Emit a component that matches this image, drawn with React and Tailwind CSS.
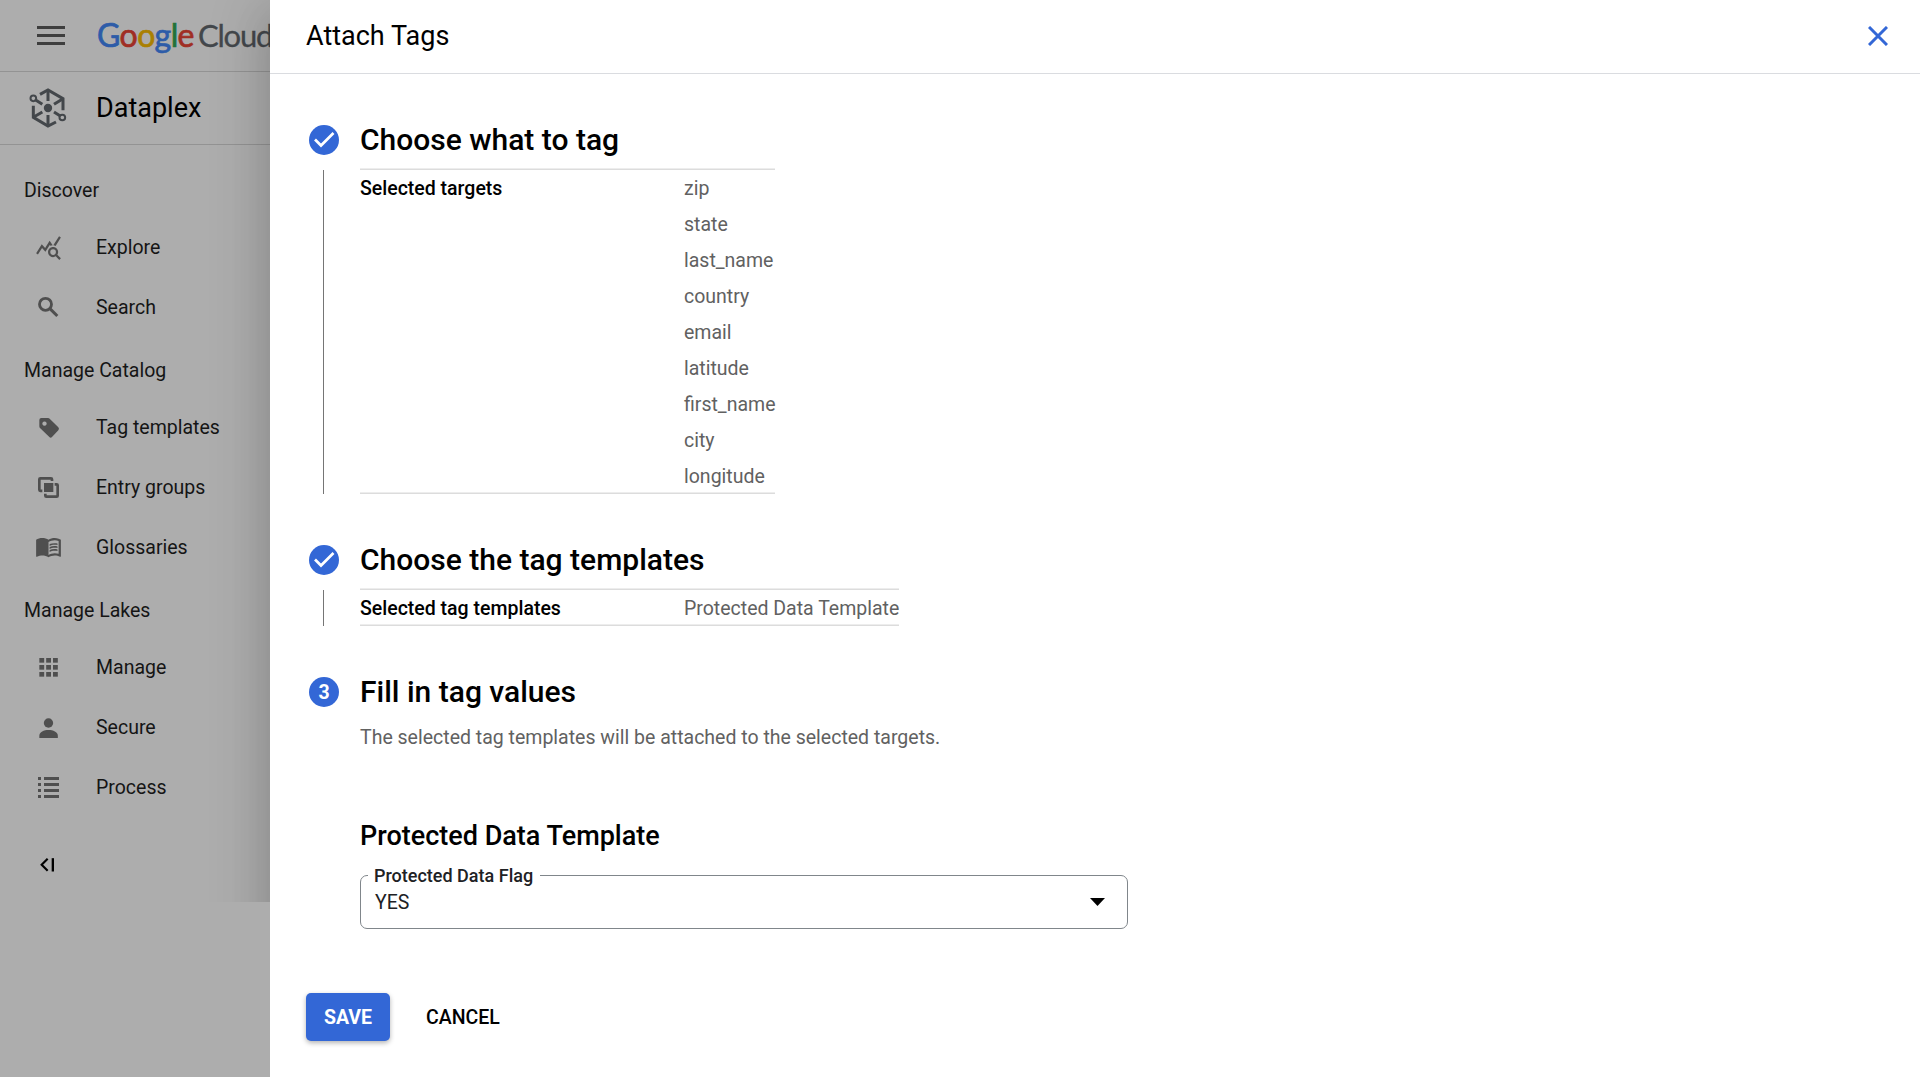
import React from "react";
import { MdQueryStats, MdMenuBook } from "react-icons/md";

const stroke = { fill: "none", stroke: "currentColor" };

const SearchIcon = () => (
  <svg viewBox="105 429 81 81" className="size-[27px]">
    <circle cx="136.500" cy="463" r="18" strokeWidth="8.500" {...stroke} />
    <path d="M149 475L172 498" strokeWidth="9" {...stroke} />
  </svg>
);

const TagIcon = () => (
  <svg viewBox="105 39 81 81" className="size-[27px]" fill="currentColor">
    <path
      fillRule="evenodd"
      d="M124 54h20q3 0 5 2L175 82q4 5 0 9L156 111q-4 4-8 0L120 84q-2-2-2-5V60q0-6 6-6zM133.500 64.500a6.500 6.500 0 1 0 .01 0z"
    />
  </svg>
);

const GroupsIcon = () => (
  <svg viewBox="105 219 81 81" className="size-[27px]">
    <path d="M127 272.500H121q-3 0-3-3V238q0-3 3-3H153q3 0 3 3V243" strokeWidth="8" {...stroke} />
    <path d="M164 253H170q3 0 3 3V287q0 3-3 3H139q-3 0-3-3V281" strokeWidth="8" {...stroke} />
    <rect x="132" y="249" width="28" height="27" fill="currentColor" />
  </svg>
);

const GridIcon = () => (
  <svg viewBox="105 759 81 81" className="size-[27px]" fill="currentColor">
    {[774, 795, 816].map((y) =>
      [118, 138.5, 159].map((x) => <rect key={x + "-" + y} x={x} y={y} width="14.500" height="14" />)
    )}
  </svg>
);

const PersonIcon = () => (
  <svg viewBox="105 219 81 81" className="size-[27px]" fill="currentColor">
    <circle cx="145.500" cy="249" r="14" />
    <path d="M118 294v-7c0-11 14-17 27.500-17s28 6 28 17v7z" />
  </svg>
);

const ListIcon = () => (
  <svg viewBox="105 399 81 81" className="size-[27px]" fill="currentColor" shapeRendering="crispEdges">
    {[411, 429, 447, 465].map((y) => (
      <g key={y}>
        <rect x="114" y={y} width="9" height="9" />
        <rect x="132" y={y} width="45" height="9" />
      </g>
    ))}
  </svg>
);

const DataplexIcon = () => (
  <svg viewBox="87 261 114 126" className="w-[38px] h-[42px] text-[#43474b]">
    <g strokeWidth="9" {...stroke}>
      <path d="M120 283L144 270L189 296V331" />
      <path d="M144 270V303M189 296L162 313" />
      <path d="M168 366L144 378L100 352V317" />
      <path d="M144 378V345M100 352L127 336" />
      <path d="M107 300L127 313M181 348L162 336" />
    </g>
    <circle cx="100" cy="295" r="8.500" strokeWidth="6" {...stroke} />
    <circle cx="187" cy="352.500" r="8.500" strokeWidth="6" {...stroke} />
    <circle cx="144" cy="324" r="12.500" fill="currentColor" />
  </svg>
);

const NavGroup = ({ title, children }) => (
  <section>
    <h3 className="h-[60px] pl-6 pt-[7px] leading-[54px]">{title}</h3>
    {children}
  </section>
);

const NavItem = ({ icon, label }) => (
  <a className="flex h-[60px] items-center pl-[35px]">
    <span className="mb-px w-[61px] text-[#4f4f4f]">{icon}</span>
    <span className="pt-[2px]">{label}</span>
  </a>
);

const Logo = () => (
  <div className="flex items-baseline whitespace-nowrap pb-px font-['Lato'] text-[32px] leading-[40px]">
    <span className="w-[101px] tracking-[-0.600px] [-webkit-text-stroke:0.700px]">
      <span className="text-[#2d5ca8]">G</span>
      <span className="text-[#a02e24]">o</span>
      <span className="text-[#aa8002]">o</span>
      <span className="text-[#2d5ca8]">g</span>
      <span className="text-[#237239]">l</span>
      <span className="text-[#a02e24]">e</span>
    </span>
    <span className="text-[31px] tracking-[-1.200px] text-[#43474b] [-webkit-text-stroke:0.300px]">Cloud</span>
  </div>
);

const Sidebar = () => (
  <aside className="relative h-full w-[270px] shrink-0 overflow-hidden bg-[#adadad] text-[#151515]">
    <div className="flex h-[72px] items-center border-b border-[#939393] pl-[37px]">
      <div className="flex w-[60px] shrink-0 flex-col gap-[5px]">
        <i className="h-[3px] w-7 bg-[#3e3e3e]" />
        <i className="h-[3px] w-7 bg-[#3e3e3e]" />
        <i className="h-[3px] w-7 bg-[#3e3e3e]" />
      </div>
      <Logo />
    </div>
    <div className="flex h-[73px] items-center border-b border-[#939393] pl-[29px]">
      <DataplexIcon />
      <span className="ml-[29px] text-[27px] text-black">Dataplex</span>
    </div>
    <nav className="pt-3">
      <NavGroup title="Discover">
        <NavItem icon={<MdQueryStats size={27} className="relative top-px" />} label="Explore" />
        <NavItem icon={<SearchIcon />} label="Search" />
      </NavGroup>
      <NavGroup title="Manage Catalog">
        <NavItem icon={<TagIcon />} label="Tag templates" />
        <NavItem icon={<GroupsIcon />} label="Entry groups" />
        <NavItem icon={<MdMenuBook size={27} />} label="Glossaries" />
      </NavGroup>
      <NavGroup title="Manage Lakes">
        <NavItem icon={<GridIcon />} label="Manage" />
        <NavItem icon={<PersonIcon />} label="Secure" />
        <NavItem icon={<ListIcon />} label="Process" />
      </NavGroup>
    </nav>
    <svg viewBox="114 649.500 54 54" className="ml-[38px] mt-[39px] h-[18px] w-[18px] text-black">
      <path d="M143 658L125 676L143 694" strokeWidth="6.500" {...stroke} />
      <path d="M158.500 656V696" strokeWidth="7" {...stroke} />
    </svg>
    <div className="pointer-events-none absolute inset-x-0 top-0 h-[902px] overflow-hidden">
      <div className="absolute left-[270px] top-0 h-[1077px] w-[1650px] shadow-[0_24px_36px_3px_rgba(0,0,0,0.1),0_9px_54px_10px_rgba(0,0,0,0.12)]" />
    </div>
  </aside>
);

const Rule = ({ className = "" }) => (
  <div className={"h-[2px] border-t border-b border-t-[#ededed] border-b-[#dcdcdc] " + className} />
);

const StepHeading = ({ marker, children }) => (
  <div className="flex h-[60px] items-center pl-[3px]">
    <span className="flex size-[30px] items-center justify-center rounded-full bg-[#3367d6] text-[19.500px] font-bold text-white">
      {marker}
    </span>
    <h2 className="ml-[21px] text-[30px] font-medium leading-[40px]">{children}</h2>
  </div>
);

const Check = () => (
  <svg viewBox="0 0 30 30" className="size-[30px]">
    <path d="M6 14.500L12 20.500L24.500 8" fill="none" stroke="white" strokeWidth="2.700" />
  </svg>
);

const DoneStep = ({ title, label, values }) => (
  <section className="mb-9">
    <StepHeading marker={<Check />}>{title}</StepHeading>
    <div className="flex pl-[17px]">
      <div className="mr-9 w-px bg-[#757575]" />
      <div>
        <Rule className="-mt-[2px]" />
        <div className="flex">
          <div className="w-[324px] pt-[2px] font-medium leading-[34px]">{label}</div>
          <ul className="leading-[34px] text-[#616161]">
            {values.map((v) => (
              <li key={v} className="pt-[2px]">
                {v}
              </li>
            ))}
          </ul>
        </div>
        <Rule className="-mt-[2px]" />
      </div>
    </div>
  </section>
);

const Drawer = () => (
  <main className="h-full flex-1 bg-white text-black">
    <header className="flex h-[74px] items-center justify-between border-b border-[#dadce0] pb-px pl-9 pr-8">
      <h1 className="pb-px text-[27px] leading-[40px]">Attach Tags</h1>
      <svg viewBox="0 0 20 20" className="size-5 text-[#3367d6]">
        <path d="M1 1L19 19M19 1L1 19" strokeWidth="3" {...stroke} />
      </svg>
    </header>
    <div className="pl-9 pt-9">
      <DoneStep
        title="Choose what to tag"
        label="Selected targets"
        values={["zip", "state", "last_name", "country", "email", "latitude", "first_name", "city", "longitude"]}
      />
      <DoneStep
        title="Choose the tag templates"
        label="Selected tag templates"
        values={["Protected Data Template"]}
      />
      <section>
        <StepHeading marker={<span className="pt-[2px]">3</span>}>Fill in tag values</StepHeading>
        <div className="pl-[54px]">
          <p className="pt-[2px] leading-[28px] text-[#616161]">
            The selected tag templates will be attached to the selected targets.
          </p>
          <h3 className="mt-16 text-[27px] font-medium leading-[40px]">Protected Data Template</h3>
          <div className="relative mt-[19px] flex h-[54px] w-[768px] items-center justify-between rounded-[7px] border border-[#80868b] pl-[14px] pr-[22px]">
            <span className="absolute left-[7px] top-[-12px] bg-white pl-[6px] pr-[7px] text-[18px] font-medium leading-6 text-[#202124]">
              Protected Data Flag
            </span>
            <span className="pt-[2px] text-[#202124]">YES</span>
            <svg viewBox="0 0 15 8" className="h-2 w-[15px]">
              <path d="M0 0H15L7.500 8Z" />
            </svg>
          </div>
        </div>
      </section>
      <div className="mt-16 flex items-center font-medium">
        <button className="h-12 w-[84px] rounded-[5px] bg-[#3367d6] pt-[2px] font-bold text-white shadow-[0_2px_5px_rgba(0,0,0,0.3)]">
          SAVE
        </button>
        <button className="ml-9 pt-[2px]">CANCEL</button>
      </div>
    </div>
  </main>
);

export default function App() {
  return (
    <div className="flex h-[1077px] w-[1920px] overflow-hidden font-['Roboto',sans-serif] text-[19.500px]">
      <Sidebar />
      <Drawer />
    </div>
  );
}
